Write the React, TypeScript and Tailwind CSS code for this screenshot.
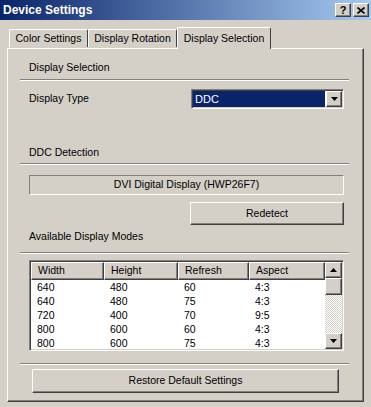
import React from "react";

const raised =
  "border border-t-white border-l-white border-r-[#404040] border-b-[#404040] shadow-[inset_-1px_-1px_#808080]";
const sunken =
  "border border-t-[#808080] border-l-[#808080] border-r-white border-b-white shadow-[inset_1px_1px_#404040,inset_-1px_-1px_#d4d0c8]";

const modes = [
  ["640", "480", "60", "4:3"],
  ["640", "480", "75", "4:3"],
  ["720", "400", "70", "9:5"],
  ["800", "600", "60", "4:3"],
  ["800", "600", "75", "4:3"],
];

const colWidths = ["w-[73px]", "w-[74px]", "w-[71px]", "w-[76px]"];

function Arrow({ up }: { up?: boolean }) {
  return (
    <svg width="7" height="4" viewBox="0 0 7 4">
      {up ? <path d="M3.5 0 L7 4 L0 4 Z" fill="#000" /> : <path d="M0 0 L7 0 L3.5 4 Z" fill="#000" />}
    </svg>
  );
}

function Separator() {
  return <div className="ml-[12px] w-[329px] h-[2px] border-t border-t-[#808080] border-b border-b-white" />;
}

function Label({ text, className = "" }: { text: string; className?: string }) {
  return <div className={"ml-[21px] h-[13px] leading-[13px] " + className}>{text}</div>;
}

export default function App() {
  return (
    <div className="w-[371px] h-[407px] bg-[#d4d0c8] text-black text-[10.5px] font-['Liberation_Sans',Arial,sans-serif] overflow-hidden flex flex-col">
      {/* title bar */}
      <div className="h-[20px] flex items-center justify-between pl-[3px] pr-[2px] bg-[linear-gradient(to_right,#0a246a,#a6caf0)]">
        <span className="text-white font-bold text-[12px] leading-none">Device Settings</span>
        <div className="flex gap-[2px]">
          <div className={"w-[16px] h-[14px] bg-[#d4d0c8] flex items-center justify-center font-bold text-[11px] leading-none " + raised}>
            ?
          </div>
          <div className={"w-[16px] h-[14px] bg-[#d4d0c8] flex items-center justify-center " + raised}>
            <svg width="8" height="7" viewBox="0 0 8 7">
              <path d="M0.5 0.5 L7.5 6.5 M7.5 0.5 L0.5 6.5" stroke="#000" strokeWidth="1.6" />
            </svg>
          </div>
        </div>
      </div>

      {/* tabs */}
      <div className="mt-[7px] ml-[7px] pl-[2px] h-[21px] flex items-end">
        <div className="w-[79px] h-[18px] mb-[1px] flex items-center justify-center border-t border-l border-t-white border-l-white border-r border-r-[#404040] rounded-tl-[2px] rounded-tr-[2px]">
          Color Settings
        </div>
        <div className="w-[89px] h-[18px] mb-[1px] flex items-center justify-center border-t border-l border-t-white border-l-white border-r border-r-[#404040] rounded-tl-[2px] rounded-tr-[2px]">
          Display Rotation
        </div>
        <div className="relative z-10 w-[94px] h-[22px] -mb-px bg-[#d4d0c8] flex items-start pt-[3px] justify-center border-t border-l border-t-white border-l-white border-r border-r-[#404040] rounded-tl-[2px] rounded-tr-[2px]">
          Display Selection
        </div>
      </div>

      {/* panel */}
      <div className="ml-[7px] w-[357px] h-[354px] border border-t-white border-l-white border-r-[#404040] border-b-[#404040] shadow-[inset_-1px_-1px_#808080] flex flex-col">
        <Label text="Display Selection" className="mt-[12px]" />
        <div className="mt-[5px]">
          <Separator />
        </div>

        <div className="mt-[8px] h-[20px] flex items-center">
          <div className="ml-[21px] w-[162px]">Display Type</div>
          <div className={"w-[153px] h-[20px] bg-white flex " + sunken}>
            <div className="flex-1 m-[1px] mr-0 bg-[#0a246a] text-white flex items-center pl-[2px] text-[11px]">DDC</div>
            <div className={"w-[16px] h-[16px] mt-[1px] mr-[1px] ml-[1px] bg-[#d4d0c8] flex items-center justify-center " + raised}>
              <Arrow />
            </div>
          </div>
        </div>

        <Label text="DDC Detection" className="mt-[37px]" />
        <div className="mt-[4px]">
          <Separator />
        </div>

        <div className="mt-[10px] ml-[21px] w-[315px] h-[20px] border border-t-[#808080] border-l-[#808080] border-r-white border-b-white flex items-center justify-center">
          DVI Digital Display (HWP26F7)
        </div>

        <div className="mt-[7px] ml-[182px] w-[154px] h-[23px] flex items-center justify-center border border-t-white border-l-white border-r-[#404040] border-b-[#404040] shadow-[inset_-1px_-1px_#808080]">
          Redetect
        </div>

        <Label text="Available Display Modes" className="mt-[5px]" />
        <div className="mt-[9px]">
          <Separator />
        </div>

        {/* list */}
        <div className={"mt-[6px] ml-[21px] w-[315px] h-[91px] bg-white flex p-[1px] " + sunken}>
          <div className="w-[294px] h-full overflow-hidden">
            <div className="flex h-[18px]">
              {["Width", "Height", "Refresh", "Aspect"].map((h, i) => (
                <div key={h} className={colWidths[i] + " h-full bg-[#d4d0c8] pl-[6px] flex items-center " + raised}>
                  {h}
                </div>
              ))}
            </div>
            {modes.map((row, r) => (
              <div key={r} className="flex h-[14px] items-center">
                {row.map((c, i) => (
                  <div key={i} className={colWidths[i] + " pl-[6px] leading-[14px]"}>
                    {c}
                  </div>
                ))}
              </div>
            ))}
          </div>
          <div className="w-[17px] h-full flex flex-col">
            <div className={"h-[16px] bg-[#d4d0c8] flex items-center justify-center " + raised}>
              <Arrow up />
            </div>
            <div className={"h-[17px] bg-[#d4d0c8] " + raised} />
            <div className="flex-1 bg-[repeating-conic-gradient(#ffffff_0%_25%,#d4d0c8_0%_50%)] bg-[length:2px_2px]" />
            <div className={"h-[16px] bg-[#d4d0c8] flex items-center justify-center " + raised}>
              <Arrow />
            </div>
          </div>
        </div>

        <div className="mt-[12px]">
          <Separator />
        </div>

        <div className="mt-[4px] ml-[24px] w-[307px] h-[24px] flex items-center justify-center border border-t-white border-l-white border-r-[#404040] border-b-[#404040] shadow-[inset_-1px_-1px_#808080]">
          Restore Default Settings
        </div>
      </div>
    </div>
  );
}
